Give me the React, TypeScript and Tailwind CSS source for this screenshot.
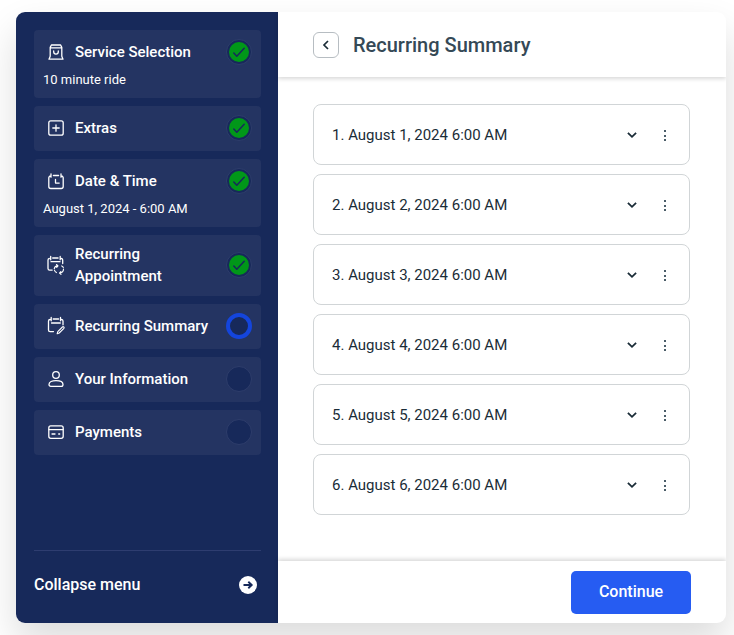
import type { ReactNode } from "react";

type Status = "done" | "current" | "pending";

interface Step {
  title: string;
  detail?: string;
  status: Status;
  icon: ReactNode;
}

function StepIcon({ children }: { children: ReactNode }) {
  return (
    <svg
      className="size-5 shrink-0"
      viewBox="0 0 20 20"
      fill="none"
      stroke="currentColor"
      strokeWidth="1.3"
      strokeLinecap="round"
      strokeLinejoin="round"
      aria-hidden="true"
    >
      {children}
    </svg>
  );
}

const bagIcon = (
  <StepIcon>
    <path d="M4.200 5.400 5.400 3h9.200l1.200 2.400v8.800l1.200 3H3l1.200-3ZM4.200 5.800h11.600" />
    <path d="M7.700 9v.8a2.300 2.300 0 0 0 4.600 0V9" />
  </StepIcon>
);

const plusIcon = (
  <StepIcon>
    <rect x="2.800" y="2.800" width="14.400" height="14.400" rx="2" />
    <path d="M10 6.800v6.400M6.800 10h6.400" />
  </StepIcon>
);

const clockCalendarIcon = (
  <StepIcon>
    <path d="M4.800 5a2 2 0 0 0-2 1.600v8.900a2 2 0 0 0 2 2h10.400a2 2 0 0 0 2-2V6.600a2 2 0 0 0-2-1.600M7.400 4.500h5.200M5 2.800v3.400M15 2.800v3.400M9.500 8.500v3.600h3.700" />
  </StepIcon>
);

const repeatCalendarIcon = (
  <StepIcon>
    <path d="M3.300 3.500A1.600 1.600 0 0 0 2 5v8.500a1.600 1.600 0 0 0 1.600 1.600h2.600M15.400 3.500A1.600 1.600 0 0 1 16.700 5v3.600M4.700 1.500v3.300M14.200 1.500v3.300M6.700 3h5.400M5 6.700h9" />
    <path
      strokeWidth="1.100"
      d="M8.200 13.800a3.700 3.700 0 0 1 3.700-3M12 10.800l-1.500-1.300M12 10.800l-1.300 1.500M8.400 15.200a4.200 4.200 0 0 0 2 2.400M17.500 14a4.100 4.100 0 0 1-4 4M13.500 18l1.500 1.300M13.500 18l1.300-1.500M17.300 12.400a4 4 0 0 0-1.600-1.500"
    />
  </StepIcon>
);

const editCalendarIcon = (
  <StepIcon>
    <path d="M4.100 3.500A1.600 1.600 0 0 0 2.500 5v9a1.600 1.600 0 0 0 1.600 1.600h3.400M15.600 3.500A1.600 1.600 0 0 1 17 5v3.800M5.200 1.500v3.300M14.500 1.500v3.300M7.200 3h5.400M5.500 7h8.800" />
    <path
      strokeWidth="1.100"
      d="m11.800 15.600 4.600-4.600c.9-.9 2.300.4 1.500 1.400l-4.700 4.600-2 .7Z"
    />
  </StepIcon>
);

const personIcon = (
  <StepIcon>
    <circle cx="10" cy="6" r="3.300" />
    <path d="M3 15.400c0-2.400 3.200-3.700 7-3.700s7 1.300 7 3.700c0 1.200-.7 1.900-1.800 1.900H4.800C3.700 17.300 3 16.600 3 15.400Z" />
  </StepIcon>
);

const cardIcon = (
  <StepIcon>
    <rect x="2.800" y="3.900" width="14.400" height="12.400" rx="2" />
    <path d="M3 7.600h14M6 12h3M12.700 12h1" />
  </StepIcon>
);

const steps: Step[] = [
  { title: "Service Selection", detail: "10 minute ride", status: "done", icon: bagIcon },
  { title: "Extras", status: "done", icon: plusIcon },
  { title: "Date & Time", detail: "August 1, 2024 - 6:00 AM", status: "done", icon: clockCalendarIcon },
  { title: "Recurring Appointment", status: "done", icon: repeatCalendarIcon },
  { title: "Recurring Summary", status: "current", icon: editCalendarIcon },
  { title: "Your Information", status: "pending", icon: personIcon },
  { title: "Payments", status: "pending", icon: cardIcon },
];

const appointments = [
  "August 1, 2024 6:00 AM",
  "August 2, 2024 6:00 AM",
  "August 3, 2024 6:00 AM",
  "August 4, 2024 6:00 AM",
  "August 5, 2024 6:00 AM",
  "August 6, 2024 6:00 AM",
];

function StatusMark({ status }: { status: Status }) {
  if (status === "current") {
    return <span className="size-[26px] shrink-0 rounded-full border-4 border-[#1445dc] bg-[#17295a]" />;
  }
  return (
    <span className="flex size-[26px] shrink-0 items-center justify-center rounded-full border border-[#2e3d6b] bg-[#17295a]">
      {status === "done" && (
        <svg className="size-5" viewBox="0 0 20 20" fill="none" aria-hidden="true">
          <circle cx="10" cy="10" r="10" fill="#019719" />
          <path
            d="m4.800 11 3 3.300 7.400-8"
            stroke="#17295a"
            strokeWidth="1.500"
            strokeLinecap="round"
            strokeLinejoin="round"
          />
        </svg>
      )}
    </span>
  );
}

function Sidebar() {
  return (
    <aside className="flex w-[262px] shrink-0 flex-col bg-[#17295a] pb-1 pl-[18px] pr-[17px] pt-[18px] text-white">
      <ol className="flex flex-col gap-2">
        {steps.map((step) => (
          <li key={step.title} className="rounded bg-[#243462] pl-2 pr-[9px]">
            <div className="flex min-h-[45px] items-center pb-[9px] pl-1 pt-2">
              {step.icon}
              <span className="ml-[9px] flex-1 text-[15px] font-medium leading-[22px]">{step.title}</span>
              <StatusMark status={step.status} />
            </div>
            {step.detail && <p className="-mt-1 pb-[9px] pl-px text-[13px] leading-[18px]">{step.detail}</p>}
          </li>
        ))}
      </ol>
      <div className="mt-auto flex h-[69px] items-center justify-between border-t border-[#2e3d70] pr-1">
        <button id="collapse" className="text-base font-medium leading-6">
          Collapse menu
        </button>
        <svg className="size-[18px]" viewBox="0 0 18 18" fill="none" aria-hidden="true">
          <circle cx="9" cy="9" r="9" fill="#fff" />
          <path d="M4.500 9h8M9.300 5.700 12.700 9l-3.400 3.300" stroke="#17295a" strokeWidth="1.900" />
        </svg>
      </div>
    </aside>
  );
}

function AppointmentRow({ index, label }: { index: number; label: string }) {
  return (
    <li className="flex h-[61px] items-center rounded-lg border border-[#d1d5d7] pl-[18px] pr-4 text-[#1a2c37]">
      <span className="flex-1 text-[15px] leading-6">
        {index}. {label}
      </span>
      <button aria-label="Show details" className="flex size-4 items-center justify-center">
        <svg className="size-4" viewBox="0 0 16 16" fill="none" aria-hidden="true">
          <path d="m3.900 5.800 4.100 4 4.100-4" stroke="currentColor" strokeWidth="1.800" />
        </svg>
      </button>
      <button aria-label="More options" className="ml-[17px] flex size-4 items-center justify-center">
        <svg className="size-4" viewBox="0 0 16 16" fill="#4a5c68" aria-hidden="true">
          <rect x="7" y="3" width="2" height="2" />
          <rect x="7" y="8" width="2" height="2" />
          <rect x="7" y="12" width="2" height="2" />
        </svg>
      </button>
    </li>
  );
}

export default function App() {
  return (
    <div className="flex min-h-screen overflow-hidden bg-white py-3 pl-4 pr-2 font-['Roboto',sans-serif]">
      <div className="flex flex-1 rounded-[9px] bg-white shadow-[0_19px_38px_rgba(0,0,0,0.14)] overflow-hidden">
        <Sidebar />
        <main className="flex min-w-0 flex-1 flex-col">
          <header className="flex h-[65px] items-center gap-[14px] pl-[35px] shadow-[0_2px_4px_rgba(0,0,0,0.15)]">
            <button
              aria-label="Back"
              className="flex size-[26px] items-center justify-center rounded-md border border-[#b7bdc2] text-[#1a2c37]"
            >
              <svg className="size-4" viewBox="0 0 16 16" fill="none" aria-hidden="true">
                <path d="M10 4 6 8l4 4" stroke="currentColor" strokeWidth="1.700" />
              </svg>
            </button>
            <h1 className="text-xl font-medium leading-7 text-[#354956]">Recurring Summary</h1>
          </header>
          <ol className="flex flex-1 flex-col gap-[9px] pb-[27px] pl-[35px] pr-9 pt-[27px]">
            {appointments.map((label, i) => (
              <AppointmentRow key={label} index={i + 1} label={label} />
            ))}
          </ol>
          <footer className="flex h-[62px] items-center justify-end pr-[35px] shadow-[0_-2px_4px_rgba(0,0,0,0.15)]">
            <button className="h-[43px] w-[120px] rounded-[5px] bg-[#265cf2] text-base font-medium text-white">
              Continue
            </button>
          </footer>
        </main>
      </div>
    </div>
  );
}
